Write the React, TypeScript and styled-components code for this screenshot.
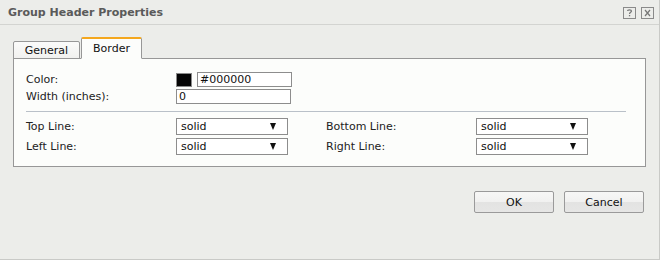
import React from "react";
import styled, { createGlobalStyle } from "styled-components";

const GlobalStyle = createGlobalStyle`
  body {
    margin: 0;
    font-family: "DejaVu Sans", Verdana, sans-serif;
    font-size: 11px;
    color: #222;
  }
`;

const Dialog = styled.div`
  width: 660px;
  height: 260px;
  box-sizing: border-box;
  background: #ecedea;
  border-right: 1px solid #c9cac7;
  border-bottom: 1px solid #c9cac7;
  display: flex;
  flex-direction: column;
`;

const TitleBar = styled.div`
  height: 25px;
  box-sizing: border-box;
  border-bottom: 1px solid #d3d4d1;
  display: flex;
  align-items: center;
  justify-content: space-between;
  padding: 1px 5px 0 8px;
`;

const Title = styled.div`
  font-weight: bold;
  font-size: 11px;
  color: #5a5a5a;
`;

const TitleIcons = styled.div`
  display: flex;
  gap: 5px;
  margin-top: 1px;
`;

const Body = styled.div`
  padding: 12px 13px 0 13px;
`;

const TabStrip = styled.div`
  display: flex;
  align-items: flex-end;
  gap: 1px;
  height: 22px;
  margin-bottom: -1px;
  position: relative;
  z-index: 1;
`;

const Tab = styled.div<{ active?: boolean }>`
  box-sizing: border-box;
  height: ${({ active }) => (active ? "22px" : "18px")};
  width: ${({ active }) => (active ? "61px" : "67px")};
  border: 1px solid #979797;
  border-bottom: ${({ active }) => (active ? "1px solid #fcfdfb" : "1px solid #979797")};
  border-top: ${({ active }) => (active ? "2px solid #f4a71e" : "1px solid #979797")};
  border-radius: 2px 2px 0 0;
  background: ${({ active }) =>
    active ? "#fcfdfb" : "linear-gradient(#fbfbfa, #f1f1ef)"};
  display: flex;
  align-items: center;
  justify-content: center;
  font-size: 11px;
  color: #111;
  padding-bottom: ${({ active }) => (active ? "1px" : "0")};
`;

const Panel = styled.div`
  box-sizing: border-box;
  height: 109px;
  background: #fcfdfb;
  border: 1px solid #979797;
  padding: 13px 12px 0 12px;
`;

const FormRow = styled.div`
  display: grid;
  grid-template-columns: 150px auto;
  align-items: center;
  height: 15px;
  margin-bottom: 2px;
`;

const Label = styled.div`
  font-size: 11px;
  color: #222;
  white-space: nowrap;
`;

const ColorField = styled.div`
  display: flex;
  align-items: center;
  gap: 5px;
`;

const Swatch = styled.div`
  width: 16px;
  height: 14px;
  box-sizing: border-box;
  background: #050505;
  border: 1px solid #8a8a8a;
`;

const TextInput = styled.div<{ w: number }>`
  width: ${({ w }) => w}px;
  height: 15px;
  box-sizing: border-box;
  border: 1px solid #8d8d8d;
  background: #fff;
  font-size: 11px;
  line-height: 13px;
  padding-left: 2px;
  color: #111;
`;

const Separator = styled.div`
  width: 600px;
  height: 1px;
  background: #b9c0c8;
  margin: 7px 0 6px;
`;

const LineGrid = styled.div`
  display: grid;
  grid-template-columns: 150px 150px 150px 112px;
  grid-auto-rows: 17px;
  row-gap: 3px;
  align-items: center;
`;

const Select = styled.div`
  width: 112px;
  height: 17px;
  box-sizing: border-box;
  border: 1px solid #8d8d8d;
  background: #fff;
  display: flex;
  align-items: center;
  justify-content: space-between;
  padding: 0 11px 0 4px;
  font-size: 11px;
  color: #111;
`;

const Arrow = styled.span`
  width: 0;
  height: 0;
  border-left: 3.5px solid transparent;
  border-right: 3.5px solid transparent;
  border-top: 7px solid #111;
`;

const Footer = styled.div`
  display: flex;
  justify-content: flex-end;
  gap: 10px;
  padding: 24px 15px 0 0;
`;

const Button = styled.div`
  width: 80px;
  height: 22px;
  box-sizing: border-box;
  border: 1px solid #9a9a9a;
  border-radius: 2px;
  background: linear-gradient(#f7f7f6 0%, #f1f1f0 50%, #e3e3e2 51%, #e6e6e5 100%);
  display: flex;
  align-items: center;
  justify-content: center;
  font-size: 11px;
  color: #111;
`;

const HelpIcon = () => (
  <svg width="13" height="12" viewBox="0 0 13 12">
    <rect x="0.5" y="0.5" width="12" height="11" fill="none" stroke="#8a8a8a" />
    <path
      d="M4.5 4 C4.5 2.5 8.5 2.5 8.5 4 C8.5 5.3 6.5 5.3 6.5 7"
      fill="none"
      stroke="#777"
      strokeWidth="1.2"
    />
    <rect x="5.9" y="8" width="1.3" height="1.3" fill="#777" />
  </svg>
);

const CloseIcon = () => (
  <svg width="13" height="12" viewBox="0 0 13 12">
    <rect x="0.5" y="0.5" width="12" height="11" fill="none" stroke="#8a8a8a" />
    <path d="M4 3 L9 9 M9 3 L4 9" stroke="#777" strokeWidth="1.2" />
  </svg>
);

const SelectBox = ({ value }: { value: string }) => (
  <Select>
    <span>{value}</span>
    <Arrow />
  </Select>
);

const App = () => {
  return (
    <Dialog>
      <GlobalStyle />
      <TitleBar>
        <Title>Group Header Properties</Title>
        <TitleIcons>
          <HelpIcon />
          <CloseIcon />
        </TitleIcons>
      </TitleBar>
      <Body>
        <TabStrip>
          <Tab>General</Tab>
          <Tab active>Border</Tab>
        </TabStrip>
        <Panel>
          <FormRow>
            <Label>Color:</Label>
            <ColorField>
              <Swatch />
              <TextInput w={95}>#000000</TextInput>
            </ColorField>
          </FormRow>
          <FormRow>
            <Label>Width (inches):</Label>
            <TextInput w={115}>0</TextInput>
          </FormRow>
          <Separator />
          <LineGrid>
            <Label>Top Line:</Label>
            <SelectBox value="solid" />
            <Label>Bottom Line:</Label>
            <SelectBox value="solid" />
            <Label>Left Line:</Label>
            <SelectBox value="solid" />
            <Label>Right Line:</Label>
            <SelectBox value="solid" />
          </LineGrid>
        </Panel>
      </Body>
      <Footer>
        <Button>OK</Button>
        <Button>Cancel</Button>
      </Footer>
    </Dialog>
  );
};

export default App;
